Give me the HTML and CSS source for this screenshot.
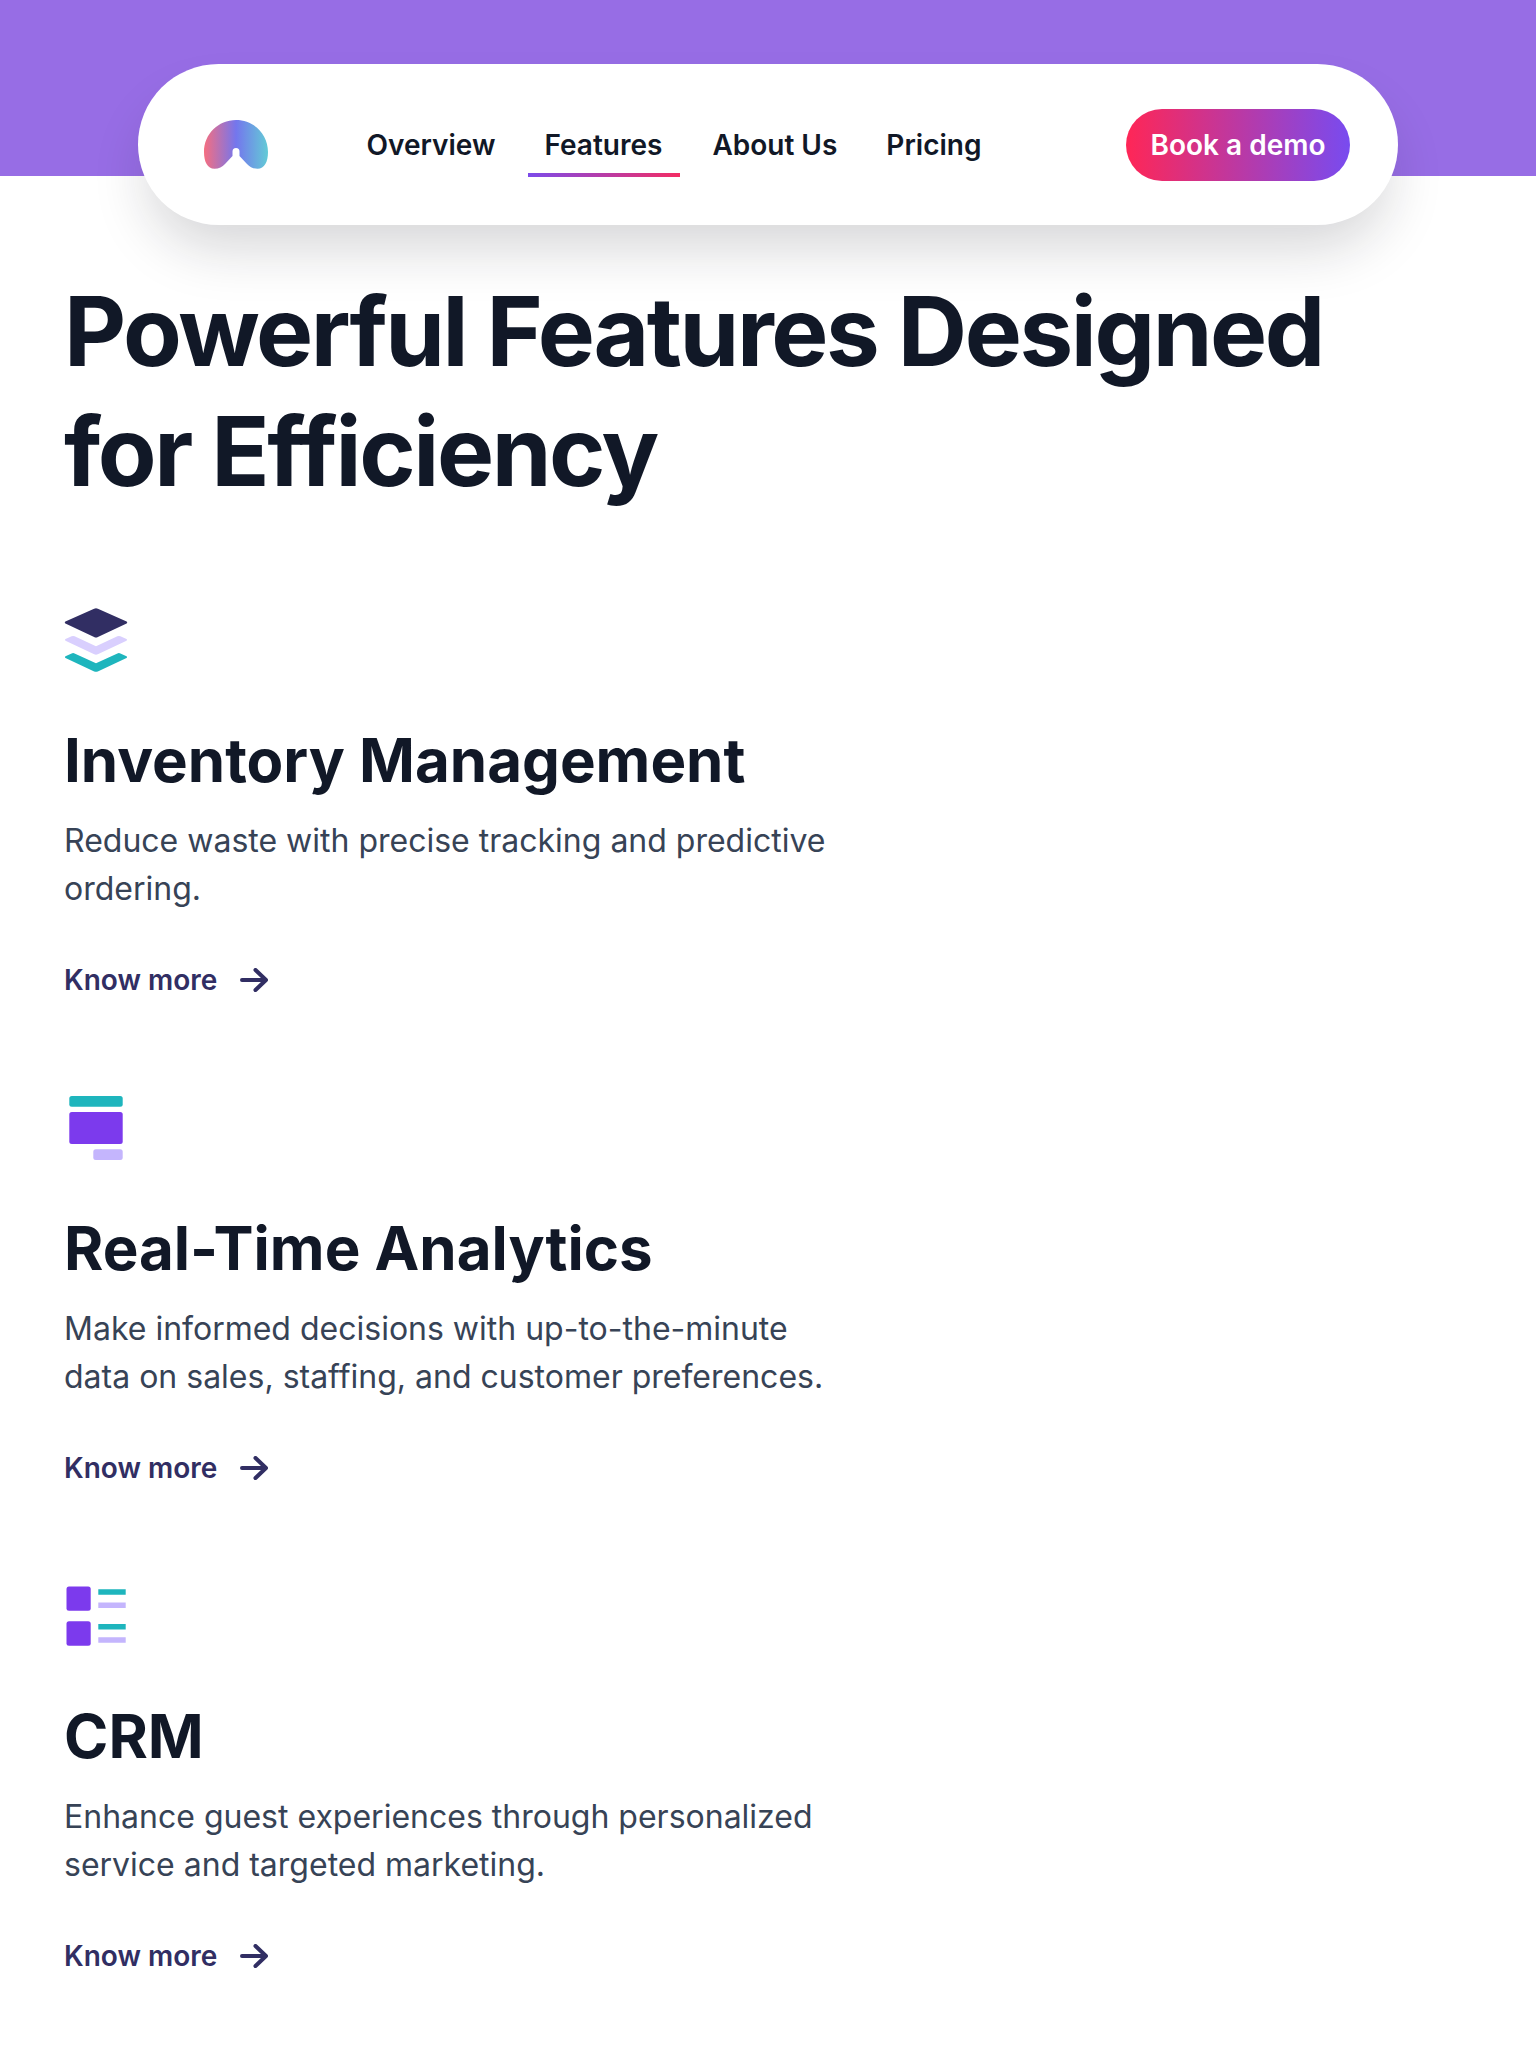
FILE: index.html
```html
<!DOCTYPE html>
<html lang="en">
<head>
<meta charset="utf-8">
<title>Features</title>
<link rel="stylesheet" href="styles.css">
</head>
<body>
<header class="banner">
  <nav class="nav">
    <svg class="logo" width="64" height="49" viewBox="0 0 64 49" aria-hidden="true">
      <defs><linearGradient id="logo-fill" x1="0" x2="1" y1="0" y2="0"><stop offset="0" stop-color="#f56e80"/><stop offset=".5" stop-color="#7476ed"/><stop offset="1" stop-color="#63cbd6"/></linearGradient></defs>
      <path fill="url(#logo-fill)" d="M0 32C0 14 14.300 0 32 0s32 14 32 32c0 10-3.500 16.700-10.500 16.700-4.500 0-7.700-2-10.500-4.800L35.500 36v-4.500a3.500 3.500 0 0 0-7 0V36L21 43.900c-2.800 2.800-6 4.800-10.500 4.800C3.500 48.700 0 42 0 32Z"/>
    </svg>
    <div class="links">
      <a class="link">Overview</a>
      <a class="link active">Features</a>
      <a class="link">About Us</a>
      <a class="link">Pricing</a>
    </div>
    <a class="demo">Book a demo</a>
  </nav>
</header>
<main class="content">
  <h1 class="title">Powerful Features Designed<br>for Efficiency</h1>

  <section class="feature">
    <svg class="icon" width="64" height="64" viewBox="0 0 64 64" aria-hidden="true">
      <g transform="translate(.6 0)">
      <path fill="#312e63" d="M29.500 .7q1.900-1 3.800 0L62 13.600q1.200.9 0 1.800L33.300 28.900q-1.900 1-3.800 0L.800 15.400q-1.200-.9 0-1.800Z"/>
      <path fill="#d9cffe" d="M.900 31 7 28.300q1.500-.6 3 0L31.400 38.200 52.800 28.300q1.500-.6 3 0L61.900 31q1.200.8 0 1.700L33.200 46.200q-1.800.9-3.600 0L.900 32.700q-1.200-.9 0-1.700Z"/>
      <path fill="#1eb5bd" d="M.900 48.200 7 45.400q1.500-.6 3 0L31.400 55.300 52.800 45.400q1.500-.6 3 0L61.900 48.200q1.200.8 0 1.700L33.200 63.400q-1.800.9-3.600 0L.900 49.900q-1.200-.9 0-1.700Z"/>
      </g>
    </svg>
    <h2 class="name">Inventory Management</h2>
    <p class="text">Reduce waste with precise tracking and predictive<br>ordering.</p>
    <a class="more">Know more
      <svg class="arrow" width="28" height="24" viewBox="0 0 28 24" aria-hidden="true"><path d="M2 12H26M15.500 2 26 12 15.500 22"/></svg>
    </a>
  </section>

  <section class="feature">
    <svg class="icon" width="64" height="64" viewBox="0 0 64 64" aria-hidden="true">
      <rect x="5.300" y="0" width="53.400" height="10.700" rx="2.500" fill="#1eb5bd"/>
      <rect x="5.300" y="16" width="53.400" height="32" rx="2.500" fill="#7c3aed"/>
      <rect x="29.300" y="53.300" width="29.400" height="10.700" rx="2.500" fill="#c4b5fd"/>
    </svg>
    <h2 class="name">Real-Time Analytics</h2>
    <p class="text">Make informed decisions with up-to-the-minute<br>data on sales, staffing, and customer preferences.</p>
    <a class="more">Know more
      <svg class="arrow" width="28" height="24" viewBox="0 0 28 24" aria-hidden="true"><path d="M2 12H26M15.500 2 26 12 15.500 22"/></svg>
    </a>
  </section>

  <section class="feature">
    <svg class="icon" width="64" height="64" viewBox="0 0 64 64" aria-hidden="true">
      <g fill="#7c3aed"><rect x="2.500" y="2.400" width="24.200" height="24.400" rx="2.500"/><rect x="2.500" y="37.300" width="24.200" height="24.400" rx="2.500"/></g>
      <path fill="#1eb5bd" d="M34.300 5.200H61.700V10.700H34.300ZM34.300 40.100H61.700V45.600H34.300Z"/>
      <path fill="#c4b5fd" d="M34.300 18.400H61.700V23.900H34.300ZM34.300 53.200H61.700V58.700H34.300Z"/>
    </svg>
    <h2 class="name">CRM</h2>
    <p class="text">Enhance guest experiences through personalized<br>service and targeted marketing.</p>
    <a class="more">Know more
      <svg class="arrow" width="28" height="24" viewBox="0 0 28 24" aria-hidden="true"><path d="M2 12H26M15.500 2 26 12 15.500 22"/></svg>
    </a>
  </section>
</main>
</body>
</html>
```
FILE: styles.css
```css
* { box-sizing: border-box; }
body {
  margin: 0;
  background: #fff;
  color: #111827;
  font-family: Inter, "Liberation Sans", sans-serif;
}
.banner {
  height: 176px;
  padding: 64px 138px 0;
  background: #976de5;
}
.nav {
  display: flex;
  align-items: center;
  height: 161px;
  padding: 0 48px 0 66px;
  border-radius: 81px;
  background: #fff;
  box-shadow: 0 32px 56px -10px rgba(22, 22, 32, .18);
}
.links {
  display: flex;
  gap: 17px;
  margin-left: 82.500px;
}
.link {
  position: relative;
  padding: 0 16px;
  font-size: 28px;
  font-weight: 600;
  line-height: 48px;
}
.active { padding-right: 17px; }
.active::after {
  content: "";
  position: absolute;
  left: 0;
  right: -.5px;
  bottom: -8.500px;
  height: 4px;
  background: linear-gradient(90deg, #7c4bea, #f42c63);
}
.demo {
  margin-left: auto;
  width: 224px;
  height: 72px;
  border-radius: 36px;
  background: linear-gradient(90deg, #ff2656, #784bf0);
  color: #fff;
  font-size: 28px;
  font-weight: 600;
  line-height: 72px;
  text-align: center;
}
.content { padding: 95px 64px 0; }
.title {
  margin: 0 0 97px;
  font-size: 96px;
  font-weight: 700;
  line-height: 120px;
  letter-spacing: -.025em;
  position: relative;
}
.feature {
  display: flex;
  flex-direction: column;
  align-items: flex-start;
  height: 488px;
}
.name {
  margin: 52px 0 21px;
  font-size: 60px;
  font-weight: 700;
  line-height: 72px;
}
.text {
  margin: 0 0 43px;
  color: #374356;
  font-size: 32px;
  line-height: 48px;
}
.more {
  display: flex;
  align-items: center;
  gap: 23px;
  color: #312e63;
  font-size: 28px;
  font-weight: 600;
  line-height: 48px;
}
.arrow {
  fill: none;
  stroke: currentColor;
  stroke-width: 4;
  stroke-linecap: round;
  stroke-linejoin: round;
}
```
